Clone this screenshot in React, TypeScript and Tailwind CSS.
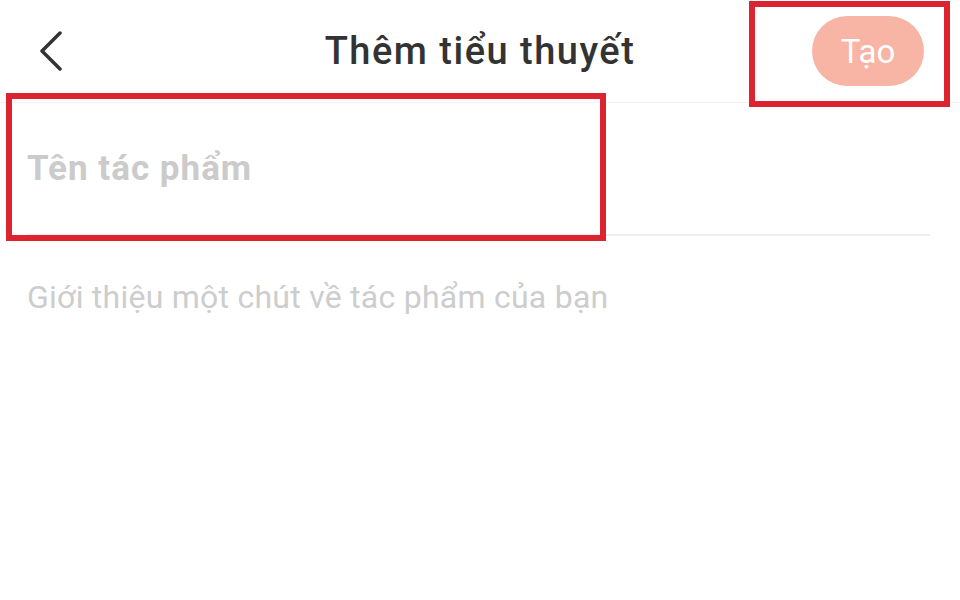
import React from "react";

export default function App() {
  return (
    <div
      className="relative w-[960px] h-[600px] bg-white overflow-hidden"
      style={{ fontFamily: "Roboto, 'Noto Sans', sans-serif" }}
    >
      <div className="grid grid-cols-[1fr_auto_1fr] items-center h-[103px] border-b border-[#f2f2f2]">
        <div className="pl-[38px] flex items-center">
          <svg width="26" height="40" viewBox="0 0 26 40" fill="none">
            <path
              d="M22 2 L4 20 L22 38"
              stroke="#333333"
              strokeWidth="3.5"
              strokeLinecap="round"
              strokeLinejoin="round"
            />
          </svg>
        </div>
        <div className="text-[38px] tracking-[1.5px] font-medium text-[#333333] leading-none">
          Thêm tiểu thuyết
        </div>
        <div className="flex justify-end pr-[36px]">
          <div className="w-[112px] h-[70px] rounded-full bg-[#f8b4a4] flex items-center justify-center text-white text-[33px] leading-none">
            Tạo
          </div>
        </div>
      </div>

      <div className="ml-[27px] mr-[30px] h-[133px] border-b-2 border-[#efefef] flex items-center">
        <span className="text-[35px] tracking-[1px] font-bold text-[#cbcbcb] leading-none">
          Tên tác phẩm
        </span>
      </div>

      <div className="pl-[27px] pt-[41px] text-[32px] tracking-[0.25px] leading-[40px] text-[#cdcdcd]">
        Giới thiệu một chút về tác phẩm của bạn
      </div>

      <div className="absolute left-[749px] top-[1px] w-[201px] h-[106px] border-[6px] border-[#dc2430]" />
      <div className="absolute left-[6px] top-[93px] w-[600px] h-[148px] border-[6px] border-[#dc2430]" />
    </div>
  );
}
